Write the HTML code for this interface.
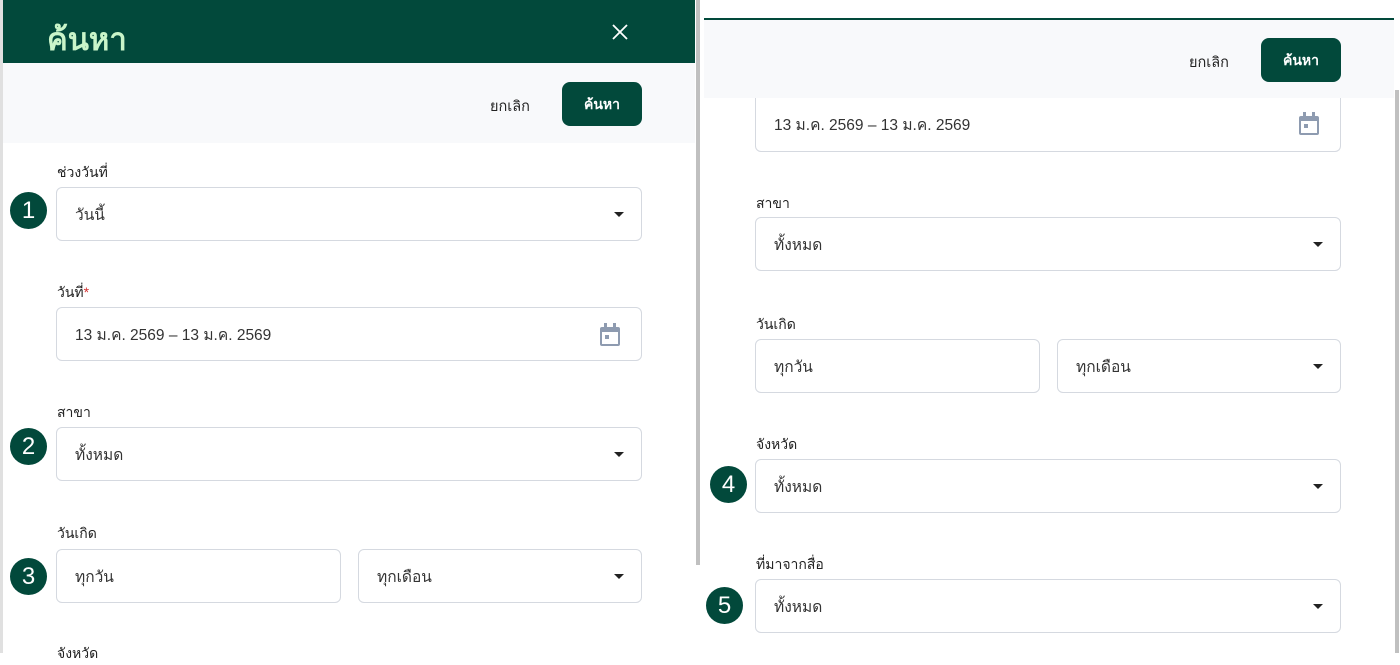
<!DOCTYPE html>
<html><head><meta charset="utf-8"><style>
*{box-sizing:border-box;margin:0;padding:0}
body{width:1400px;height:653px;overflow:hidden;background:#fff;font-family:"Liberation Sans","Noto Sans CJK SC",sans-serif;color:#222;position:relative}
.abs{position:absolute}
.lbl{position:absolute;font-size:14px;color:#222}
.inp{position:absolute;height:54px;border:1px solid #d5d9e0;border-radius:6px;background:#fff;font-size:15.5px;color:#333;padding-left:18px;line-height:55px}
.arr{position:absolute;right:17px;top:24px;width:0;height:0;border-left:5px solid transparent;border-right:5px solid transparent;border-top:5px solid #222}
.cal{position:absolute;right:20px;top:15px}
.num{position:absolute;width:37px;height:37px;border-radius:50%;background:#02493b;color:#fff;font-size:24px;text-align:center;line-height:37px}
.btn{position:absolute;width:80px;height:44px;border-radius:8px;background:#02493b;color:#fff;font-size:14px;font-weight:bold;text-align:center;line-height:44px}
.cancel{position:absolute;font-size:14.5px;color:#222}
.req{color:#d32f2f}
</style></head><body>
<div class="abs" style="left:0;top:0;width:3px;height:653px;background:#e0e0e0"></div>
<div class="abs" style="left:3px;top:0;width:692px;height:63px;background:#02493b"></div>
<div class="abs" style="left:47px;top:14px;font-size:31px;color:#c9f5c9;font-weight:bold">ค้นหา</div>
<svg class="abs" style="left:611px;top:23px" width="18" height="18" viewBox="0 0 18 18"><path d="M2 2L16 16M16 2L2 16" stroke="#fff" stroke-width="1.8"/></svg>
<div class="abs" style="left:3px;top:63px;width:692px;height:80px;background:#f8f9fb"></div>
<div class="cancel" style="left:490px;top:95px">ยกเลิก</div>
<div class="btn" style="left:562px;top:82px">ค้นหา</div>
<div class="abs" style="left:696px;top:0;width:4px;height:565px;background:#c0c0c0"></div>

<div class="lbl" style="left:57px;top:162px">ช่วงวันที่</div>
<div class="num" style="left:10px;top:192px">1</div>
<div class="inp" style="left:56px;top:187px;width:586px">วันนี้<div class="arr"></div></div>

<div class="lbl" style="left:57px;top:282px">วันที่<span class="req">*</span></div>
<div class="inp" style="left:56px;top:307px;width:586px">13 ม.ค. 2569 – 13 ม.ค. 2569<svg class="cal" width="22" height="24" viewBox="0 0 22 24"><rect x="1" y="4" width="20" height="19" rx="2" fill="#8e9bb0"/><rect x="3" y="9" width="16" height="12" fill="#fff"/><rect x="5" y="0" width="3" height="5" fill="#8e9bb0"/><rect x="14" y="0" width="3" height="5" fill="#8e9bb0"/><rect x="6" y="12" width="4" height="4" fill="#8e9bb0"/></svg></div>

<div class="lbl" style="left:57px;top:402px">สาขา</div>
<div class="num" style="left:10px;top:428px">2</div>
<div class="inp" style="left:56px;top:427px;width:586px">ทั้งหมด<div class="arr"></div></div>

<div class="lbl" style="left:57px;top:523px">วันเกิด</div>
<div class="num" style="left:10px;top:558px">3</div>
<div class="inp" style="left:56px;top:549px;width:285px">ทุกวัน</div>
<div class="inp" style="left:358px;top:549px;width:284px">ทุกเดือน<div class="arr"></div></div>
<div class="lbl" style="left:57px;top:643px">จังหวัด</div>

<div class="abs" style="left:704px;top:18px;width:690px;height:2px;background:#02493b"></div>
<div class="abs" style="left:704px;top:20px;width:690px;height:78px;background:#f8f9fb"></div>
<div class="cancel" style="left:1189px;top:51px">ยกเลิก</div>
<div class="btn" style="left:1261px;top:38px">ค้นหา</div>
<div class="abs" style="left:1395px;top:90px;width:4px;height:563px;background:#c0c0c0"></div>

<div class="inp" style="left:755px;top:98px;width:586px;border-top:none;border-radius:0 0 6px 6px;line-height:55px">13 ม.ค. 2569 – 13 ม.ค. 2569<svg class="cal" width="22" height="24" viewBox="0 0 22 24" style="top:14px"><rect x="1" y="4" width="20" height="19" rx="2" fill="#8e9bb0"/><rect x="3" y="9" width="16" height="12" fill="#fff"/><rect x="5" y="0" width="3" height="5" fill="#8e9bb0"/><rect x="14" y="0" width="3" height="5" fill="#8e9bb0"/><rect x="6" y="12" width="4" height="4" fill="#8e9bb0"/></svg></div>

<div class="lbl" style="left:756px;top:193px">สาขา</div>
<div class="inp" style="left:755px;top:217px;width:586px">ทั้งหมด<div class="arr"></div></div>

<div class="lbl" style="left:756px;top:314px">วันเกิด</div>
<div class="inp" style="left:755px;top:339px;width:285px">ทุกวัน</div>
<div class="inp" style="left:1057px;top:339px;width:284px">ทุกเดือน<div class="arr"></div></div>

<div class="lbl" style="left:756px;top:434px">จังหวัด</div>
<div class="num" style="left:710px;top:466px">4</div>
<div class="inp" style="left:755px;top:459px;width:586px">ทั้งหมด<div class="arr"></div></div>

<div class="lbl" style="left:756px;top:554px">ที่มาจากสื่อ</div>
<div class="num" style="left:706px;top:587px">5</div>
<div class="inp" style="left:755px;top:579px;width:586px">ทั้งหมด<div class="arr"></div></div>
</body></html>
